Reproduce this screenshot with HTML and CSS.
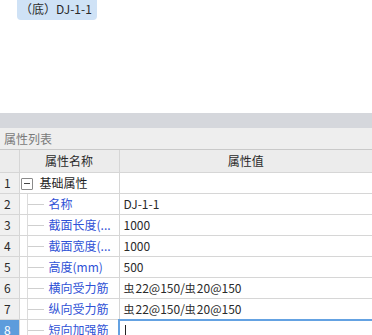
FILE: index.html
```html
<!DOCTYPE html>
<html lang="zh">
<head>
    <meta charset="UTF-8">
    <title>属性列表</title>
    <link rel="stylesheet" href="styles.css">
</head>
<body>

<div class="canvas">
    <span class="tag">（底）DJ-1-1</span>
</div>

<div class="splitter"></div>

<div class="panel">
    <div class="panel-title">属性列表</div>
    <table class="props">
        <colgroup>
            <col class="c-num">
            <col class="c-name">
            <col>
        </colgroup>
        <tr class="head">
            <th></th>
            <th>属性名称</th>
            <th>属性值</th>
        </tr>
        <tr>
            <td class="num">1</td>
            <td class="group"><span class="toggle"></span>基础属性</td>
            <td></td>
        </tr>
        <tr>
            <td class="num">2</td>
            <td class="child">名称</td>
            <td class="val">DJ-1-1</td>
        </tr>
        <tr>
            <td class="num">3</td>
            <td class="child">截面长度(...</td>
            <td class="val">1000</td>
        </tr>
        <tr>
            <td class="num">4</td>
            <td class="child">截面宽度(...</td>
            <td class="val">1000</td>
        </tr>
        <tr>
            <td class="num">5</td>
            <td class="child">高度(mm)</td>
            <td class="val">500</td>
        </tr>
        <tr>
            <td class="num">6</td>
            <td class="child">横向受力筋</td>
            <td class="val"><span class="bar">虫</span>22@150/<span class="bar">虫</span>20@150</td>
        </tr>
        <tr>
            <td class="num">7</td>
            <td class="child">纵向受力筋</td>
            <td class="val"><span class="bar">虫</span>22@150/<span class="bar">虫</span>20@150</td>
        </tr>
        <tr class="selected">
            <td class="num">8</td>
            <td class="child">短向加强筋</td>
            <td class="val edit"><span class="caret"></span></td>
        </tr>
    </table>
</div>

</body>
</html>
```

FILE: styles.css
```css
* {
    margin: 0;
    padding: 0;
    box-sizing: border-box;
}

body {
    width: 372px;
    height: 335px;
    overflow: hidden;
    background-color: #fff;
    font-family: "Noto Sans CJK SC", "Noto Sans", sans-serif;
    font-size: 12px;
    color: #2a2a2a;
}

.canvas {
    height: 113px;
    padding-left: 17px;
}

.tag {
    display: inline-block;
    height: 20px;
    line-height: 17px;
    padding: 0 5px 0 3px;
    background-color: #cfe2f6;
    border-radius: 0 0 4px 4px;
    color: #2a2a2a;
    font-size: 12px;
}

.splitter {
    height: 15px;
    background-color: #d5d7dc;
}

.panel-title {
    height: 22px;
    line-height: 22px;
    padding-left: 4px;
    background-color: #eeeeee;
    color: #7a7a7a;
    border-bottom: 1px solid #c9c9c9;
}

.props {
    width: 100%;
    border-collapse: collapse;
    table-layout: fixed;
}

.c-num {
    width: 19px;
}

.c-name {
    width: 100px;
}

.props th,
.props td {
    height: 21px;
    border: 1px solid #d6d6d6;
    border-top: none;
    font-weight: normal;
    white-space: nowrap;
    overflow: hidden;
    padding: 0;
    line-height: 20px;
}

.props td:first-child,
.props th:first-child {
    border-left: none;
}

.props td:last-child,
.props th:last-child {
    border-right: none;
}

.head th {
    height: 22px;
    background-color: #ececec;
    color: #2a2a2a;
    text-align: center;
}

.num {
    background-color: #f0f0f0;
    padding-left: 4px !important;
}

.group {
    padding-left: 1px !important;
    color: #1e1e1e;
}

.toggle {
    display: inline-block;
    position: relative;
    width: 12px;
    height: 12px;
    margin-right: 7px;
    vertical-align: -2px;
    border: 1px solid #8a8a8a;
    border-radius: 1px;
    background-color: #fff;
}

.toggle::after {
    content: "";
    position: absolute;
    left: 2px;
    top: 4px;
    width: 6px;
    height: 1px;
    background-color: #444;
}

.child {
    position: relative;
    padding-left: 29px !important;
    color: #2f52d6;
}

.child::before {
    content: "";
    position: absolute;
    left: 7px;
    top: 0;
    bottom: 0;
    border-left: 1px solid #dcdcdc;
}

.child::after {
    content: "";
    position: absolute;
    left: 8px;
    top: 10px;
    width: 16px;
    border-top: 1px solid #cfcfcf;
}

.val {
    padding-left: 4px !important;
}

.bar {
    font-size: 11px;
    margin-right: 1px;
}

.selected .num {
    background-color: #5d9cdc;
    color: #fff;
}

.edit {
    border-top: 2px solid #64a2e2 !important;
    border-left: 2px solid #64a2e2 !important;
}

.caret {
    display: inline-block;
    width: 1px;
    height: 14px;
    margin-left: 1px;
    vertical-align: -3px;
    background-color: #222;
}
```
